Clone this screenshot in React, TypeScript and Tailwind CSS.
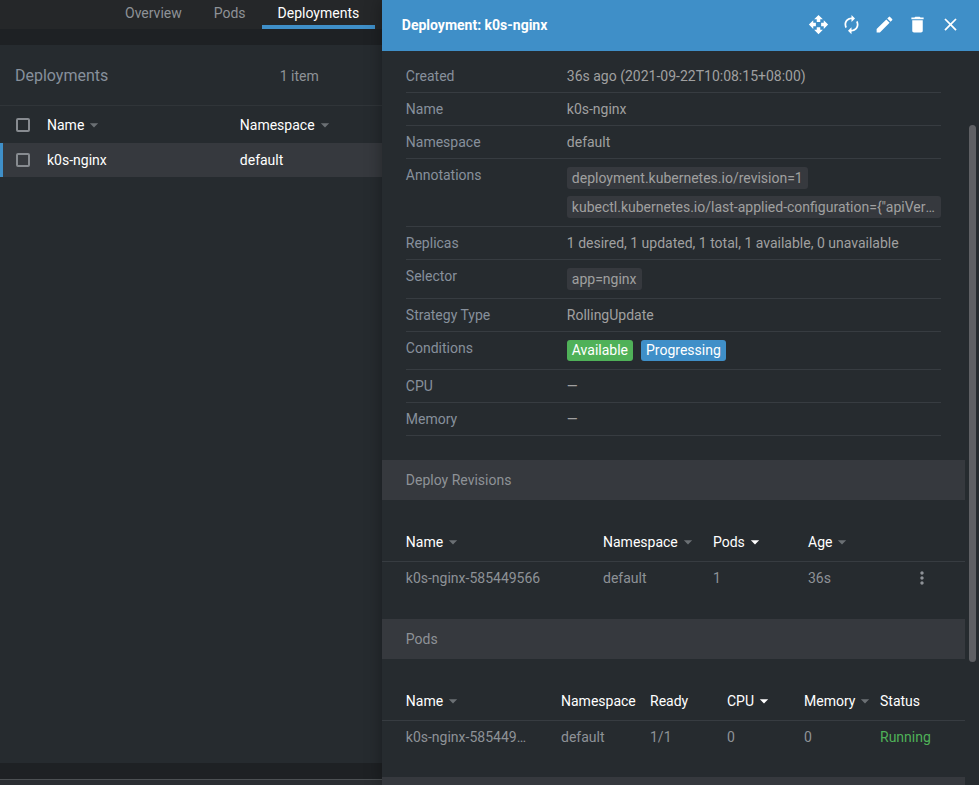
import type { ReactNode } from "react"
import {
  MdArrowDropDown,
  MdAutorenew,
  MdClose,
  MdDelete,
  MdEdit,
  MdMoreVert,
  MdOpenWith,
} from "react-icons/md"

const tabs = ["Overview", "Pods", "Deployments"]

const actions = [
  { label: "Scale", icon: MdOpenWith },
  { label: "Restart", icon: MdAutorenew },
  { label: "Edit", icon: MdEdit },
  { label: "Delete", icon: MdDelete },
  { label: "Close", icon: MdClose },
]

const SortHead = ({ children, active }: { children: string; active?: boolean }) => (
  <button className="flex items-center whitespace-nowrap cursor-pointer">
    {children}
    <MdArrowDropDown className={active ? "size-5 text-white" : "size-5 text-[#6b7074]"} />
  </button>
)

const Check = ({ label }: { label: string }) => (
  <input
    type="checkbox"
    aria-label={label}
    className="block size-[14px] appearance-none rounded-[2px] border-2 border-[#878b90] checked:bg-[#3f8fc8]"
  />
)

const Item = ({ name, children }: { name: string; children: ReactNode }) => (
  <div className="grid grid-cols-[161px_1fr] border-b border-[#373c41] py-2 leading-4">
    <dt className="text-[#87909c]">{name}</dt>
    <dd className="min-w-0 text-[#a0a0a0]">{children}</dd>
  </div>
)

const Badge = ({ children }: { children: string }) => (
  <span className="block w-fit max-w-full truncate rounded-[3px] bg-[#36393e] px-[5px] leading-[22px]">
    {children}
  </span>
)

const SectionTitle = ({ children }: { children?: string }) => (
  <div className="mt-6 h-10 bg-[#36393e] px-6 leading-10 text-[#8e9297]">{children}</div>
)

const DeploymentList = () => (
  <div className="flex min-w-0 flex-1 flex-col bg-[#1e2124]">
    <nav className="flex h-[29px] shrink-0 bg-[#252729] pl-[109px]">
      {tabs.map((tab) => (
        <a
          key={tab}
          href="#"
          className={
            tab === "Deployments"
              ? "border-b-4 border-[#3f8fc8] px-4 leading-[27px] text-white"
              : "px-4 leading-[27px] text-[#8e9297]"
          }
        >
          {tab}
        </a>
      ))}
    </nav>
    <main className="my-4 flex-1 bg-[#262b2f]">
      <header className="flex h-[60px] items-center justify-between pl-[15px] pr-[63px] pt-[2px]">
        <h1 className="text-base text-[#87909c]">Deployments</h1>
        <span className="text-[#8e9297]">1 item</span>
      </header>
      <table className="w-full table-fixed border-separate border-spacing-0 border-t border-[#303539] text-left text-white">
        <colgroup>
          <col className="w-[47px]" />
          <col />
          <col className="w-[142px]" />
        </colgroup>
        <thead>
          <tr className="h-[37px]">
            <th className="pl-4"><Check label="Select all" /></th>
            <th className="font-normal"><SortHead>Name</SortHead></th>
            <th className="font-normal"><SortHead>Namespace</SortHead></th>
          </tr>
        </thead>
        <tbody>
          <tr className="h-[34px] bg-[#36393e]">
            <td className="border-l-3 border-[#3f8fc8] pl-[13px]"><Check label="Select k0s-nginx" /></td>
            <td>k0s-nginx</td>
            <td>default</td>
          </tr>
        </tbody>
      </table>
    </main>
    <footer className="h-[6px] shrink-0 border-t border-[#4c5053] bg-[#2b2e32]" />
  </div>
)

const Details = () => (
  <dl className="px-6 pt-[9px]">
    <Item name="Created">36s ago (2021-09-22T10:08:15+08:00)</Item>
    <Item name="Name">k0s-nginx</Item>
    <Item name="Namespace">default</Item>
    <Item name="Annotations">
      <div className="flex flex-col gap-[7px]">
        <Badge>deployment.kubernetes.io/revision=1</Badge>
        <Badge>{'kubectl.kubernetes.io/last-applied-configuration={"apiVersion":"apps/v1","kind":"Deployment"}'}</Badge>
      </div>
    </Item>
    <Item name="Replicas">1 desired, 1 updated, 1 total, 1 available, 0 unavailable</Item>
    <Item name="Selector"><Badge>app=nginx</Badge></Item>
    <Item name="Strategy Type">RollingUpdate</Item>
    <Item name="Conditions">
      <div className="flex gap-2 leading-[21px] text-white">
        <span className="rounded-[3px] bg-[#4fb158] px-[5px]">Available</span>
        <span className="rounded-[3px] bg-[#3f8fc8] px-[5px]">Progressing</span>
      </div>
    </Item>
    <Item name="CPU">—</Item>
    <Item name="Memory">—</Item>
  </dl>
)

const Revisions = () => (
  <table className="mt-6 w-full table-fixed text-left">
    <colgroup>
      <col />
      <col className="w-[110px]" />
      <col className="w-[95px]" />
      <col className="w-[95px]" />
      <col className="w-[62px]" />
    </colgroup>
    <thead className="text-white">
      <tr className="h-[37px] border-b border-[#373c41]">
        <th className="pl-6 font-normal"><SortHead>Name</SortHead></th>
        <th className="font-normal"><SortHead>Namespace</SortHead></th>
        <th className="font-normal"><SortHead active>Pods</SortHead></th>
        <th className="font-normal"><SortHead>Age</SortHead></th>
        <th />
      </tr>
    </thead>
    <tbody className="text-[#8e9297]">
      <tr className="h-[34px]">
        <td className="pl-6">k0s-nginx-585449566</td>
        <td>default</td>
        <td>1</td>
        <td>36s</td>
        <td className="pr-6">
          <button aria-label="More" className="mx-auto block cursor-pointer">
            <MdMoreVert className="size-5" />
          </button>
        </td>
      </tr>
    </tbody>
  </table>
)

const Pods = () => (
  <table className="mt-6 w-full table-fixed text-left">
    <colgroup>
      <col />
      <col className="w-[89px]" />
      <col className="w-[77px]" />
      <col className="w-[77px]" />
      <col className="w-[76px]" />
      <col className="w-[85px]" />
    </colgroup>
    <thead className="text-white">
      <tr className="h-[37px] border-b border-[#373c41]">
        <th className="pl-6 font-normal"><SortHead>Name</SortHead></th>
        <th className="font-normal">Namespace</th>
        <th className="font-normal">Ready</th>
        <th className="font-normal"><SortHead active>CPU</SortHead></th>
        <th className="font-normal"><SortHead>Memory</SortHead></th>
        <th className="font-normal">Status</th>
      </tr>
    </thead>
    <tbody className="text-[#8e9297]">
      <tr className="h-[33px]">
        <td className="truncate pl-6 pr-8">k0s-nginx-585449566</td>
        <td>default</td>
        <td>1/1</td>
        <td>0</td>
        <td>0</td>
        <td className="text-[#4fb158]">Running</td>
      </tr>
    </tbody>
  </table>
)

const Drawer = () => (
  <aside className="z-10 flex w-[61%] flex-col bg-[#262b2f] shadow-[0_0_16px_rgba(0,0,0,0.35)]">
    <header className="flex h-[51px] shrink-0 items-center justify-between bg-[#3f8fc8] pb-[2px] pl-5 pr-[18px] text-white">
      <h2 className="font-bold">Deployment: k0s-nginx</h2>
      <div className="flex gap-3">
        {actions.map(({ label, icon: Icon }) => (
          <button key={label} aria-label={label} className="cursor-pointer">
            <Icon className="size-[21px]" />
          </button>
        ))}
      </div>
    </header>
    <div className="flex min-h-0 flex-1">
      <div className="min-w-0 flex-1 overflow-hidden">
        <Details />
        <SectionTitle>Deploy Revisions</SectionTitle>
        <Revisions />
        <SectionTitle>Pods</SectionTitle>
        <Pods />
        <SectionTitle />
      </div>
      {/* scrollbar */}
      <div className="grid w-[14px] grid-rows-[74fr_537fr_123fr] pl-1 pr-[3px]">
        <div className="row-start-2 rounded-full bg-[#5f6064]" />
      </div>
    </div>
  </aside>
)

const App = () => {
  return (
    <div className="flex h-screen overflow-hidden font-[Roboto,sans-serif] text-sm">
      <DeploymentList />
      <Drawer />
    </div>
  )
}

export default App
